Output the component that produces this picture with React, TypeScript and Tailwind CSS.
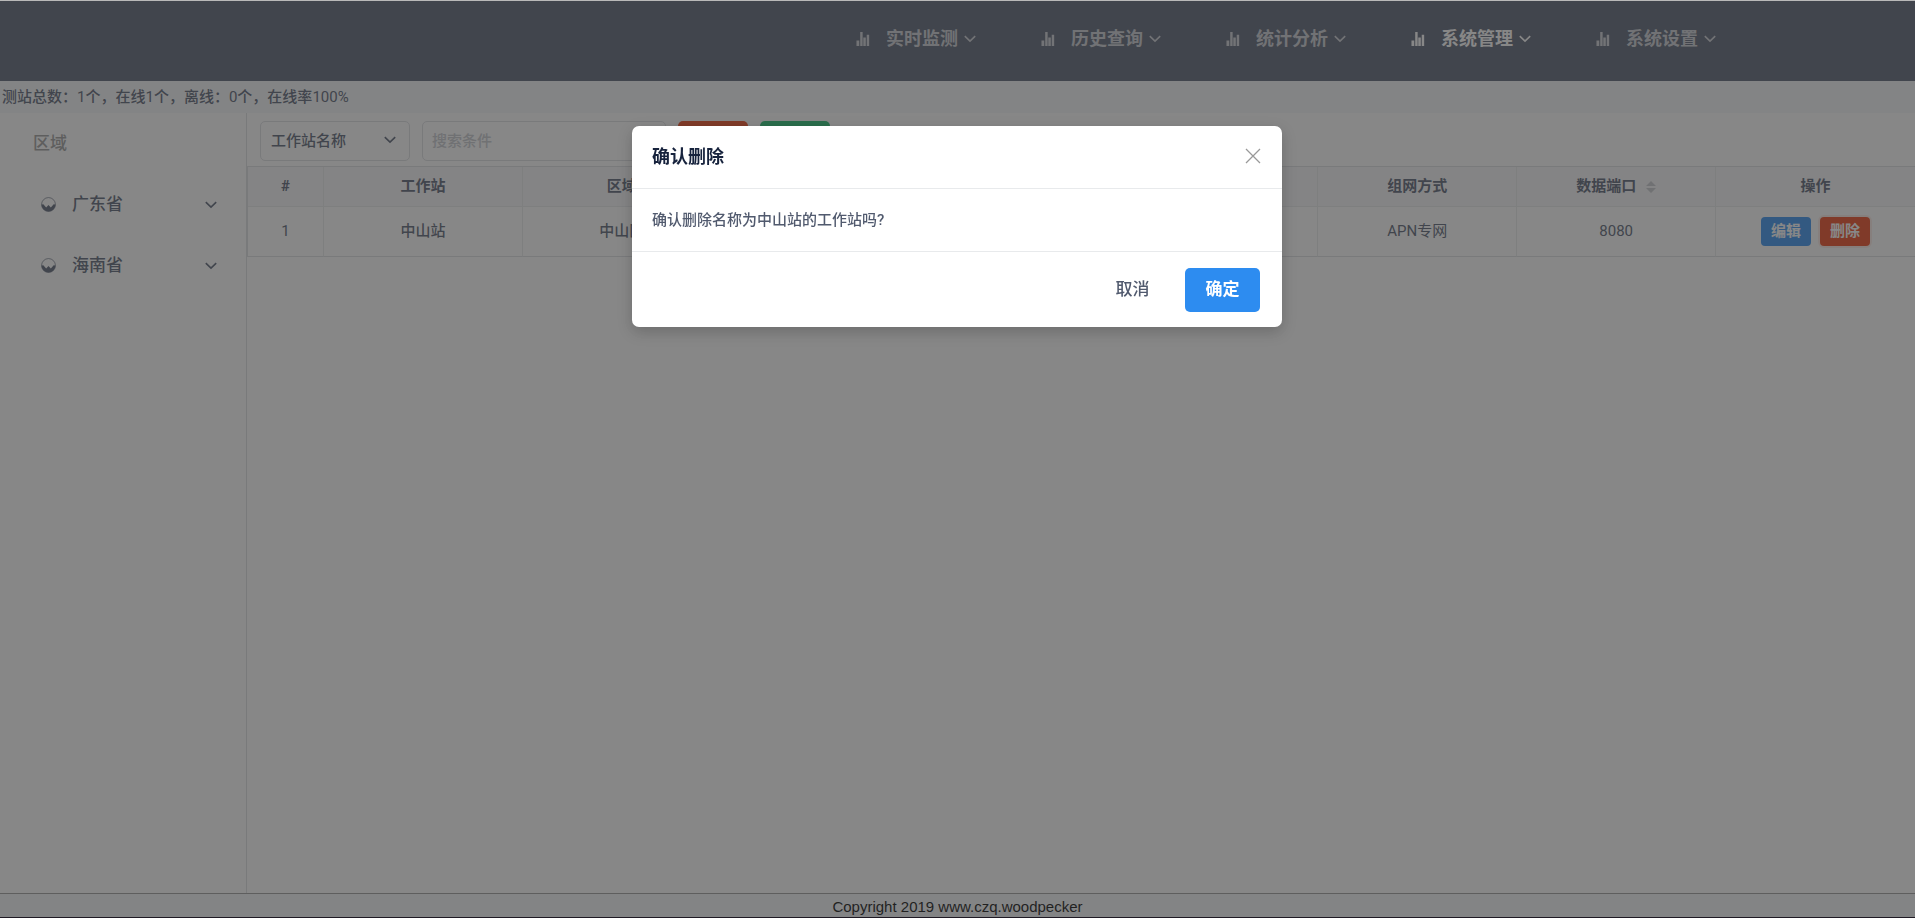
import React, { useState } from "react";
import clsx from "clsx";

interface IconProps {
  className?: string;
}

interface Station {
  id: number;
  name: string;
  area: string;
  network: string;
  port: number;
}

const navItems = ["实时监测", "历史查询", "统计分析", "系统管理", "系统设置"];

const provinces = ["广东省", "海南省"];

const stations: Station[] = [
  { id: 1, name: "中山站", area: "中山区", network: "APN专网", port: 8080 },
];

const BarsIcon = ({ className }: IconProps) => (
  <svg viewBox="0 0 14 15" className={className} fill="currentColor" aria-hidden="true">
    <path d="M0 9h3v6H0zM4 0h2.6v15H4zM7.3 6h2.7v9H7.3zM11 3h2.6v12H11z" />
  </svg>
);

const ChevronIcon = ({ className }: IconProps) => (
  <svg
    viewBox="0 0 12 8"
    className={className}
    fill="none"
    stroke="currentColor"
    strokeWidth="1.6"
    aria-hidden="true"
  >
    <path d="M0.8 1.2 6 6.2l5.2-5" />
  </svg>
);

const ProvinceIcon = ({ className }: IconProps) => (
  <svg viewBox="0 0 16 16" className={className} aria-hidden="true">
    <circle cx="8" cy="8" r="7.4" fill="none" stroke="currentColor" strokeWidth="0.7" />
    <path
      fill="currentColor"
      d="M0.5 8l2-.4 3 3.6L8 8.4l2.5 2.8 3-3.6 2 .4A7.5 7.5 0 0 1 .5 8z"
    />
  </svg>
);

const SortIcon = ({ className }: IconProps) => (
  <svg viewBox="0 0 10 12" className={className} fill="currentColor" aria-hidden="true">
    <path d="M5 0l5 5H0zM5 12l5-5H0z" />
  </svg>
);

const CloseIcon = ({ className }: IconProps) => (
  <svg
    viewBox="0 0 16 16"
    className={className}
    fill="none"
    stroke="currentColor"
    strokeWidth="1.3"
    aria-hidden="true"
  >
    <path d="M1 1l14 14M15 1 1 15" />
  </svg>
);

const Header = () => (
  <header className="flex h-20 justify-end bg-[#515a6e] pr-[159px]">
    <nav className="flex h-[75px]">
      {navItems.map((item) => (
        <a
          key={item}
          href="#"
          className={clsx(
            "flex w-[185px] items-center pl-[25px] text-[18px] font-bold",
            item === "系统管理" ? "text-white" : "text-white/70"
          )}
        >
          <BarsIcon className="mr-4 h-[14px] w-[14px]" />
          {item}
          <ChevronIcon className="ml-[6px] h-2 w-3" />
        </a>
      ))}
    </nav>
  </header>
);

const Sidebar = () => (
  <aside className="w-[247px] shrink-0 border-r border-[#dcdee2]">
    <h2 className="flex h-[61px] items-center pl-[33px] text-[17px] text-[#999]">区域</h2>
    <ul>
      {provinces.map((province) => (
        <li key={province}>
          <button
            type="button"
            className="flex h-[61px] w-full items-center pr-[29px] pl-[41px] text-[17px]"
          >
            <ProvinceIcon className="mr-4 h-[15px] w-[15px]" />
            {province}
            <ChevronIcon className="ml-auto h-2 w-3" />
          </button>
        </li>
      ))}
    </ul>
  </aside>
);

const Toolbar = () => (
  <div className="flex items-center gap-3 px-[13px] pt-2 pb-[5px]">
    <div className="relative">
      <select
        aria-label="搜索字段"
        className="h-10 w-[150px] appearance-none rounded-[5px] border border-[#dcdee2] bg-white px-[10px] text-[15px]"
      >
        <option>工作站名称</option>
      </select>
      <ChevronIcon className="pointer-events-none absolute top-[15px] right-[14px] h-2 w-3" />
    </div>
    <input
      type="text"
      aria-label="搜索条件"
      placeholder="搜索条件"
      className="h-10 w-[244px] rounded-[5px] border border-[#dcdee2] px-[9px] text-[15px] placeholder:text-[#c5c8ce]"
    />
    <button type="button" aria-label="查询" className="h-10 w-[70px] rounded-[5px] bg-[#ed4014]" />
    <button type="button" aria-label="新增" className="h-10 w-[70px] rounded-[5px] bg-[#19be6b]" />
  </div>
);

const StationTable = ({ onRemove }: { onRemove: (station: Station) => void }) => (
  <table className="w-full table-fixed border-separate border-spacing-0 border-t border-l border-[#dcdee2] text-center">
    <thead>
      <tr className="h-10 bg-[#f8f8f9] [&>th]:border-r [&>th]:border-b [&>th]:border-[#e8eaec] [&>th:last-child]:border-r-0">
        <th className="w-[76px]">#</th>
        <th>工作站</th>
        <th>区域</th>
        <th></th>
        <th></th>
        <th></th>
        <th>组网方式</th>
        <th>
          <span className="inline-flex items-center gap-[10px]">
            数据端口
            <SortIcon className="h-3 w-[10px] text-[#c5c8ce]" />
          </span>
        </th>
        <th>操作</th>
      </tr>
    </thead>
    <tbody>
      {stations.map((station) => (
        <tr
          key={station.id}
          className="h-[50px] [&>td]:border-r [&>td]:border-b [&>td]:border-r-[#e8eaec] [&>td]:border-b-[#dcdee2] [&>td:last-child]:border-r-0"
        >
          <td className="font-normal">{station.id}</td>
          <td>{station.name}</td>
          <td>{station.area}</td>
          <td></td>
          <td></td>
          <td></td>
          <td className="font-normal">{station.network}</td>
          <td className="font-normal">{station.port}</td>
          <td>
            <div className="flex justify-center gap-[9px] font-bold text-white">
              <button type="button" className="h-[29px] w-[50px] rounded-[4px] bg-[#2d8cf0]">
                编辑
              </button>
              <button
                type="button"
                className="h-[29px] w-[50px] rounded-[4px] bg-[#ed4014] ring-2 ring-[#ed4014]/10"
                onClick={() => onRemove(station)}
              >
                删除
              </button>
            </div>
          </td>
        </tr>
      ))}
    </tbody>
  </table>
);

interface ConfirmDialogProps {
  station: Station;
  onClose: () => void;
}

const ConfirmDialog = ({ station, onClose }: ConfirmDialogProps) => (
  <div className="fixed inset-0 flex items-start justify-center border-t border-b border-t-[#b9b9b9] border-b-[#1f1a24] bg-[#373737]/60 bg-clip-padding pt-[125px] pr-px">
    <div
      role="dialog"
      aria-modal="true"
      aria-labelledby="confirm-title"
      className="w-[650px] rounded-[7px] bg-white shadow-[0_5px_15px_rgba(0,0,0,0.2)]"
    >
      <div className="flex h-[63px] items-center justify-between border-b border-[#e8eaec] pr-[21px] pb-[2px] pl-5">
        <h3 id="confirm-title" className="text-[18px] font-bold text-[#17233d]">
          确认删除
        </h3>
        <button type="button" aria-label="关闭" className="text-[#999]" onClick={onClose}>
          <CloseIcon className="h-4 w-4" />
        </button>
      </div>
      <p className="flex h-[62px] items-center px-5">
        确认删除名称为{station.name}的工作站吗?
      </p>
      <div className="flex justify-end gap-[15px] border-t border-[#e8eaec] px-[22px] pt-4 pb-[15px] text-[17px]">
        <button type="button" className="h-11 w-[75px] rounded-[5px]" onClick={onClose}>
          取消
        </button>
        <button
          type="button"
          className="h-11 w-[75px] rounded-[5px] bg-[#2d8cf0] font-bold text-white"
          onClick={onClose}
        >
          确定
        </button>
      </div>
    </div>
  </div>
);

export default function App() {
  const [removing, setRemoving] = useState<Station | null>(stations[0]);

  return (
    <div className="flex h-screen flex-col bg-white pt-px font-['Roboto','Noto_Sans_CJK_SC',sans-serif] text-[15px] font-medium text-[#515a6e]">
      <Header />
      <div className="flex h-8 items-center bg-[#f5f7f9] pl-[2px]">
        <p>
          测站总数：<span className="font-normal">1</span>个，在线
          <span className="font-normal">1</span>个，离线：
          <span className="font-normal">0</span>个，在线率
          <span className="font-normal">100%</span>
        </p>
      </div>
      <div className="flex min-h-0 flex-1">
        <Sidebar />
        <main className="min-w-0 flex-1">
          <Toolbar />
          <StationTable onRemove={setRemoving} />
        </main>
      </div>
      <footer className="flex h-[25px] items-center justify-center border-t border-[#999] bg-[#f5f7f9] pt-[2px] font-['Liberation_Sans',sans-serif] text-[15px] font-normal text-black">
        Copyright 2019 www.czq.woodpecker
      </footer>
      {removing && <ConfirmDialog station={removing} onClose={() => setRemoving(null)} />}
    </div>
  );
}
